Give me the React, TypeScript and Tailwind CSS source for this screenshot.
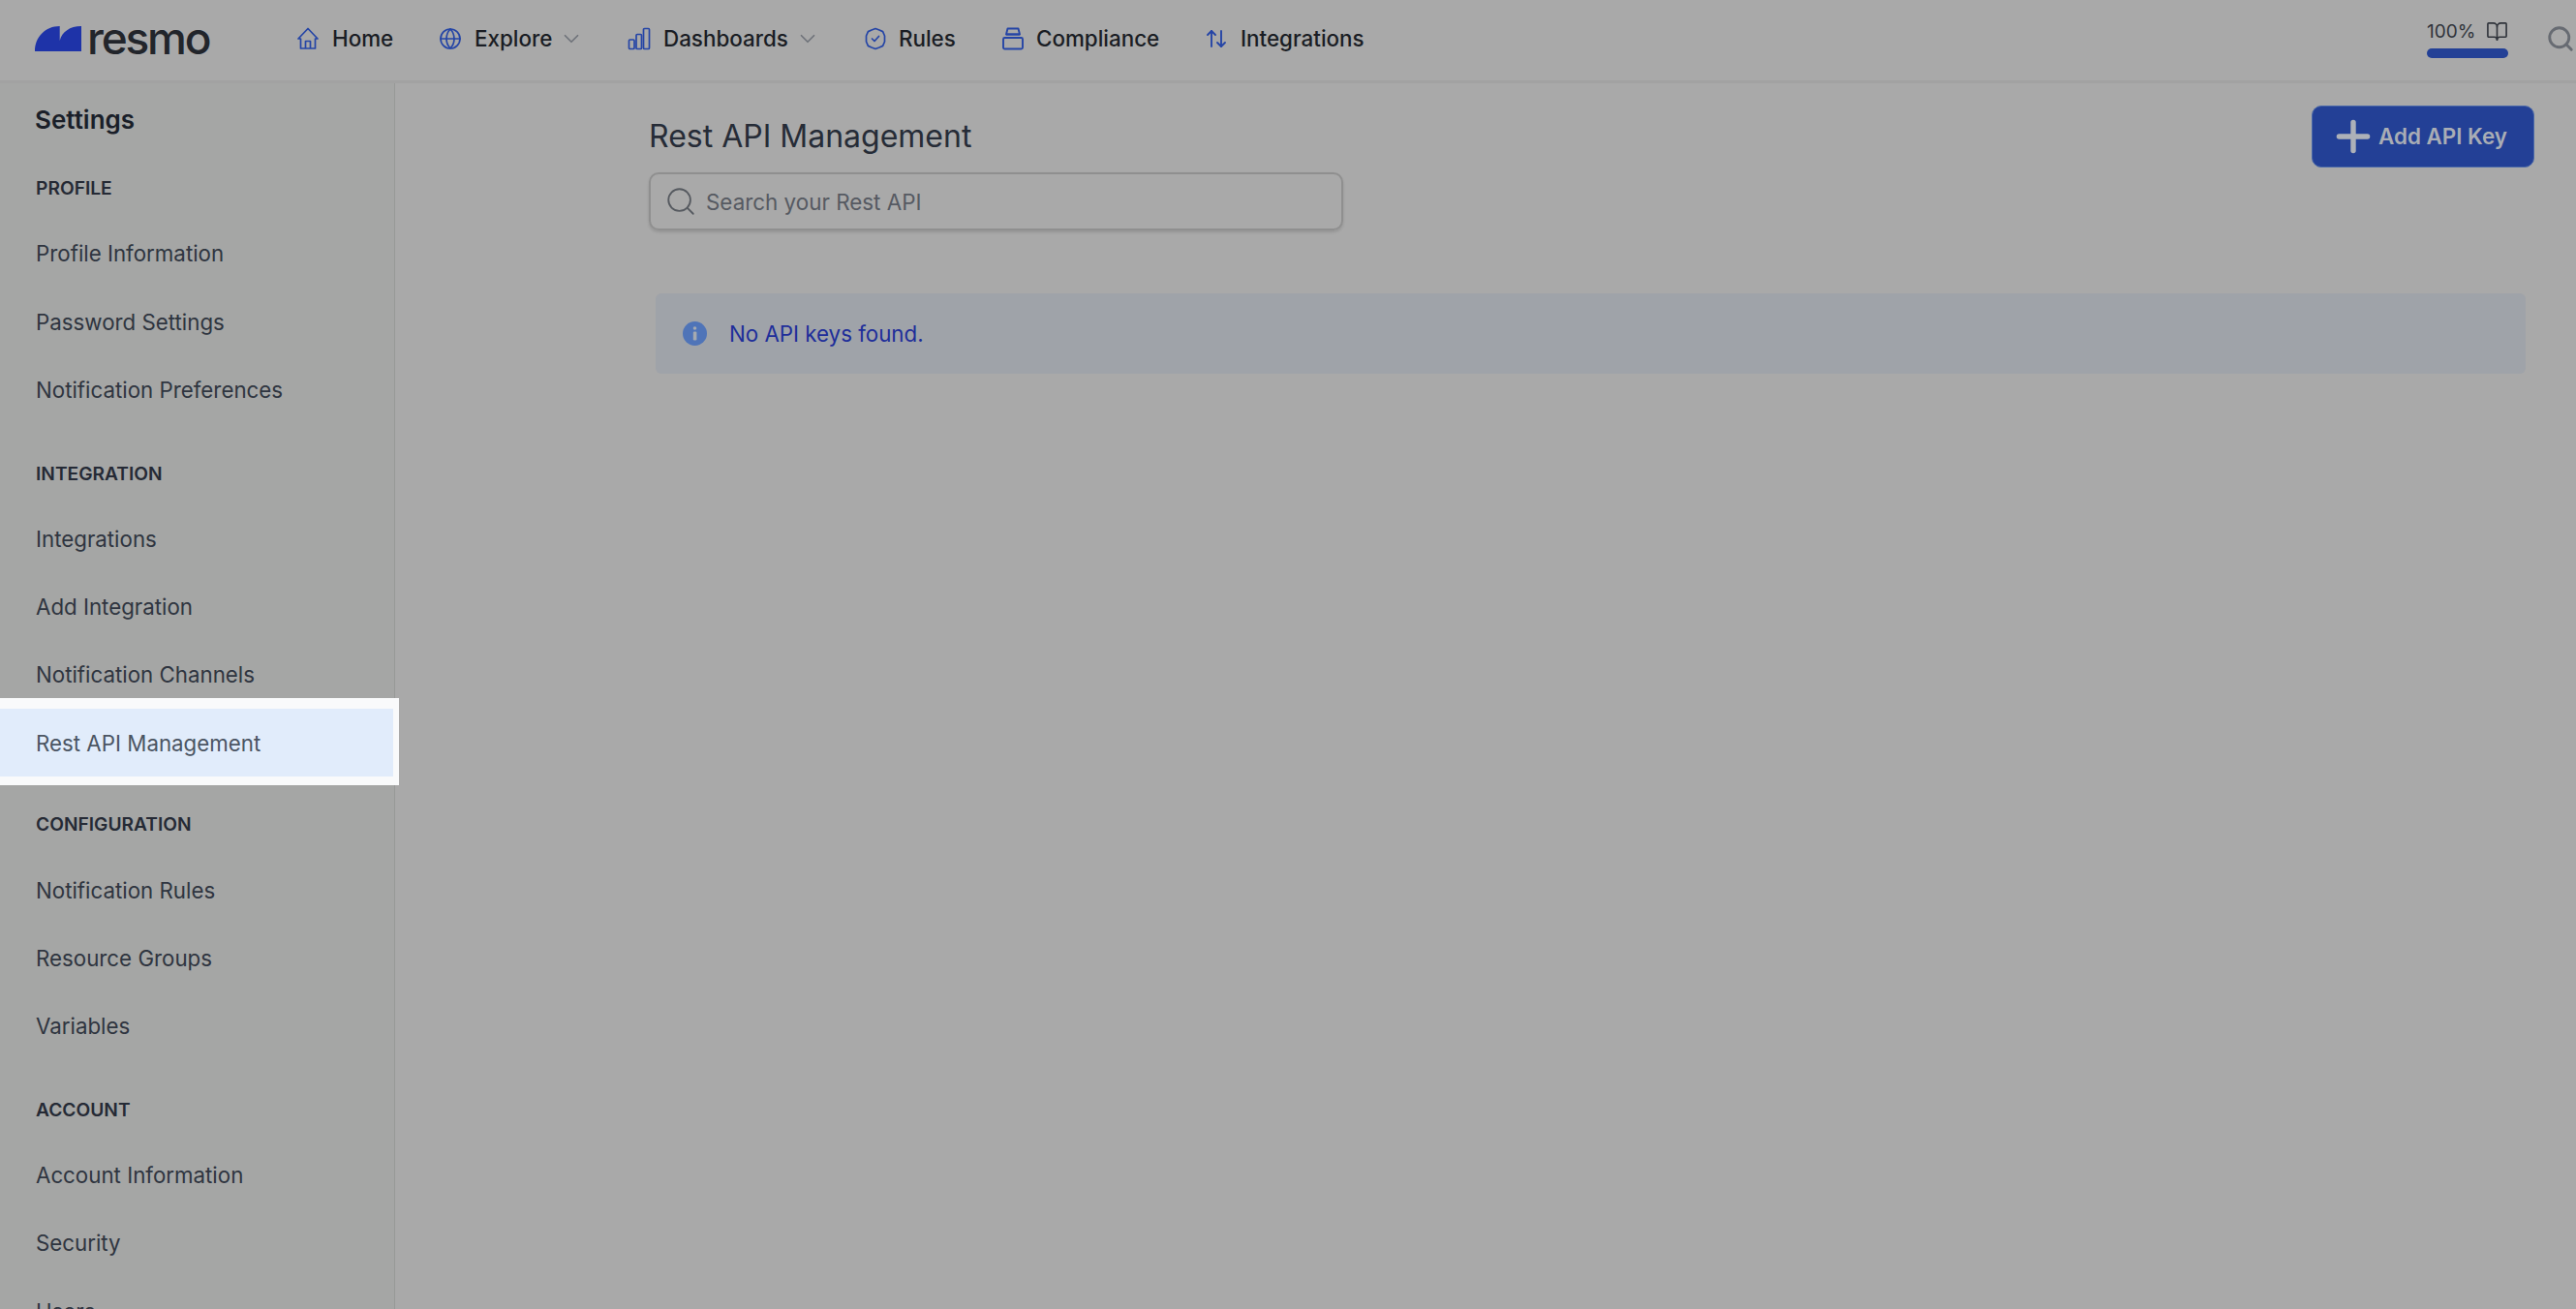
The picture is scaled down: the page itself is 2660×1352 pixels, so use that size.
import { ArrowUpDown, BookOpen, ChevronDown, Globe, Plus, Search } from "lucide-react";

const font = { fontFamily: "Inter, 'Liberation Sans', sans-serif" };

const sections = [
  { label: "PROFILE", pt: "pt-[45px]", items: ["Profile Information", "Password Settings", "Notification Preferences"] },
  { label: "INTEGRATION", pt: "pt-[41px]", items: ["Integrations", "Add Integration", "Notification Channels", "Rest API Management"] },
  { label: "CONFIGURATION", pt: "pt-[39px]", items: ["Notification Rules", "Resource Groups", "Variables"] },
  { label: "ACCOUNT", pt: "pt-[41px]", items: ["Account Information", "Security", "Users"] },
];

function HomeIcon() {
  return (
    <svg width="24" height="24" viewBox="0 0 24 24" fill="none" stroke="#2545a6" strokeWidth="1.7" strokeLinejoin="round" className="shrink-0">
      <path d="M2 12 12 1.500 22 12h-2.500v10h-15V12z" />
      <path d="M9.500 22v-7.500h5V22" />
    </svg>
  );
}

function BarsIcon() {
  return (
    <svg width="24" height="24" viewBox="0 0 24 24" fill="none" stroke="#2545a6" strokeWidth="1.7" strokeLinejoin="round" className="shrink-0">
      <rect x="1.500" y="13" width="5.500" height="9.500" rx="1" />
      <rect x="9" y="7.500" width="5.500" height="15" rx="1" />
      <rect x="16.500" y="1.500" width="6" height="21" rx="1" />
    </svg>
  );
}

function BadgeIcon() {
  return (
    <svg width="22" height="24" viewBox="0 0 22 24" fill="none" stroke="#2545a6" strokeWidth="1.7" strokeLinejoin="round" strokeLinecap="round" className="shrink-0">
      <path d="M11 1.500 15 3l3.600 1.600L20.500 9v6l-1.900 4.400L15 21l-4 1.500L7 21l-3.600-1.600L1.500 15V9l1.900-4.400L7 3z" />
      <path d="m7.500 12 2.500 2.500 4.500-5" />
    </svg>
  );
}

function StackIcon() {
  return (
    <svg width="22" height="24" viewBox="0 0 22 24" fill="none" stroke="#2545a6" strokeWidth="1.9" strokeLinejoin="round" className="shrink-0">
      <path d="M5.500 1.500h11l1.500 6H4z" />
      <path d="M4 7.500h14" />
      <rect x="1" y="11" width="20" height="11.500" rx="1.500" />
    </svg>
  );
}

function NavItem({ icon, label, chevron, className }: { icon: React.ReactNode; label: string; chevron?: boolean; className: string }) {
  return (
    <div className={`flex items-center ${className}`}>
      {icon}
      <span className="ml-[13px] text-[22.4px] font-medium text-[#1a1d24]">{label}</span>
      {chevron && <ChevronDown size={26} strokeWidth={1.6} className="ml-[7px] text-[#6f737a]" />}
    </div>
  );
}

export default function App() {
  return (
    <div className="flex h-[1352px] w-[2660px] flex-col overflow-hidden bg-[#a9a9a9]" style={font}>
      <header className="flex h-[86px] shrink-0 items-center border-b-[3px] border-[#a2a2a2] pb-[3px] pl-[36px]">
        <div className="flex h-[80px] w-[270px] shrink-0 items-center">
          <svg width="48" height="26" viewBox="0 0 48 26" className="shrink-0">
            <path d="M0 26C0 11 11 0 25.700 0v15C28 6 36 0 48 0v26z" fill="#1e33a8" />
          </svg>
          <span className="-mt-[3px] ml-[6px] text-[46px] leading-none font-medium tracking-[-2.2px] text-[#22252b]">resmo</span>
        </div>
        <NavItem icon={<HomeIcon />} label="Home" className="w-[147px]" />
        <NavItem icon={<Globe size={24} strokeWidth={1.7} className="text-[#2545a6]" />} label="Explore" chevron className="w-[195px]" />
        <NavItem icon={<BarsIcon />} label="Dashboards" chevron className="w-[245px]" />
        <NavItem icon={<BadgeIcon />} label="Rules" className="w-[142px]" />
        <NavItem icon={<StackIcon />} label="Compliance" className="w-[209px]" />
        <NavItem icon={<ArrowUpDown size={24} strokeWidth={1.9} className="text-[#2545a6]" />} label="Integrations" className="w-[170px]" />
        <div className="ml-auto flex items-center">
          <div className="flex w-[84px] flex-col">
            <div className="flex h-[24px] items-center justify-between">
              <span className="text-[19px] leading-none text-[#30343b]">100%</span>
              <BookOpen size={23} strokeWidth={1.7} className="text-[#30343b]" />
            </div>
            <div className="mt-[6px] h-[10px] rounded-full bg-[#234096]" />
          </div>
          <Search size={30} strokeWidth={2.3} className="mr-[1px] ml-[39px] text-[#676b72]" />
        </div>
      </header>
      <div className="flex min-h-0 flex-1">
        <aside className="relative w-[408px] shrink-0 border-r border-[#979997] bg-[#a5a6a5]">
          <h2 className="pt-[23px] pl-[36px] text-[26px] leading-[30px] font-semibold text-[#1a1f29]">Settings</h2>
          {sections.map((s) => (
            <section key={s.label}>
              <h3 className={`${s.pt} pb-[23px] pl-[37px] text-[19.2px] leading-[20px] font-semibold text-[#252a35]`}>{s.label}</h3>
              {s.items.map((item) =>
                item === "Rest API Management" ? (
                  <div key={item} className="relative z-10 h-[70.2px]">
                    <div className="absolute -top-[11px] -right-[5px] -bottom-[9px] left-0 flex items-center border-t-[11px] border-r-[6px] border-b-[9px] border-[#f9fafb] bg-[#e1ecfb] pl-[37px] text-[22.3px] text-[#4b5563]">
                      {item}
                    </div>
                  </div>
                ) : (
                  <div key={item} className="flex h-[70.2px] items-center pl-[37px] text-[22.3px] text-[#2f3540]">
                    {item}
                  </div>
                ),
              )}
            </section>
          ))}
        </aside>
        <main className="min-w-0 flex-1 pt-[23px] pr-[43px] pl-[262px]">
          <div className="flex items-start justify-between">
            <div className="w-[717px]">
              <h1 className="h-[69px] pt-[13px] text-[32px] leading-[38px] font-normal text-[#262c37]">Rest API Management</h1>
              <div className="flex h-[60px] items-center rounded-[10px] border-2 border-[#8f8f8f] pl-[14px] shadow-[0_2px_3px_rgba(0,0,0,0.12)]">
                <Search size={34} strokeWidth={1.3} className="text-[#565a60]" />
                <span className="mt-[2px] ml-[9px] text-[22.4px] text-[#565a62]">Search your Rest API</span>
              </div>
            </div>
            <button className="flex h-[64px] w-[230px] items-center rounded-[10px] border border-[#4a68a8] bg-[#234096] pl-[17px] text-[22.4px] font-semibold text-[#a9adb5]">
              <Plus size={50} strokeWidth={2.6} className="text-[#adb1b8]" />
              <span className="ml-[1px]">Add API Key</span>
            </button>
          </div>
          <div className="mt-[65px] ml-[7px] flex h-[83px] w-[1931px] items-center rounded-[6px] bg-[#9fa3a9] pl-[28px]">
            <svg width="25" height="25" viewBox="0 0 25 25" className="shrink-0">
              <circle cx="12.500" cy="12.500" r="12.500" fill="#4f74b8" />
              <circle cx="12.500" cy="7" r="1.800" fill="#a5aab0" />
              <rect x="10.800" y="10.500" width="3.600" height="9" rx="1.200" fill="#a5aab0" />
            </svg>
            <span className="mt-[1px] ml-[23px] text-[22.3px] text-[#1e2e9a]">No API keys found.</span>
          </div>
        </main>
      </div>
    </div>
  );
}
